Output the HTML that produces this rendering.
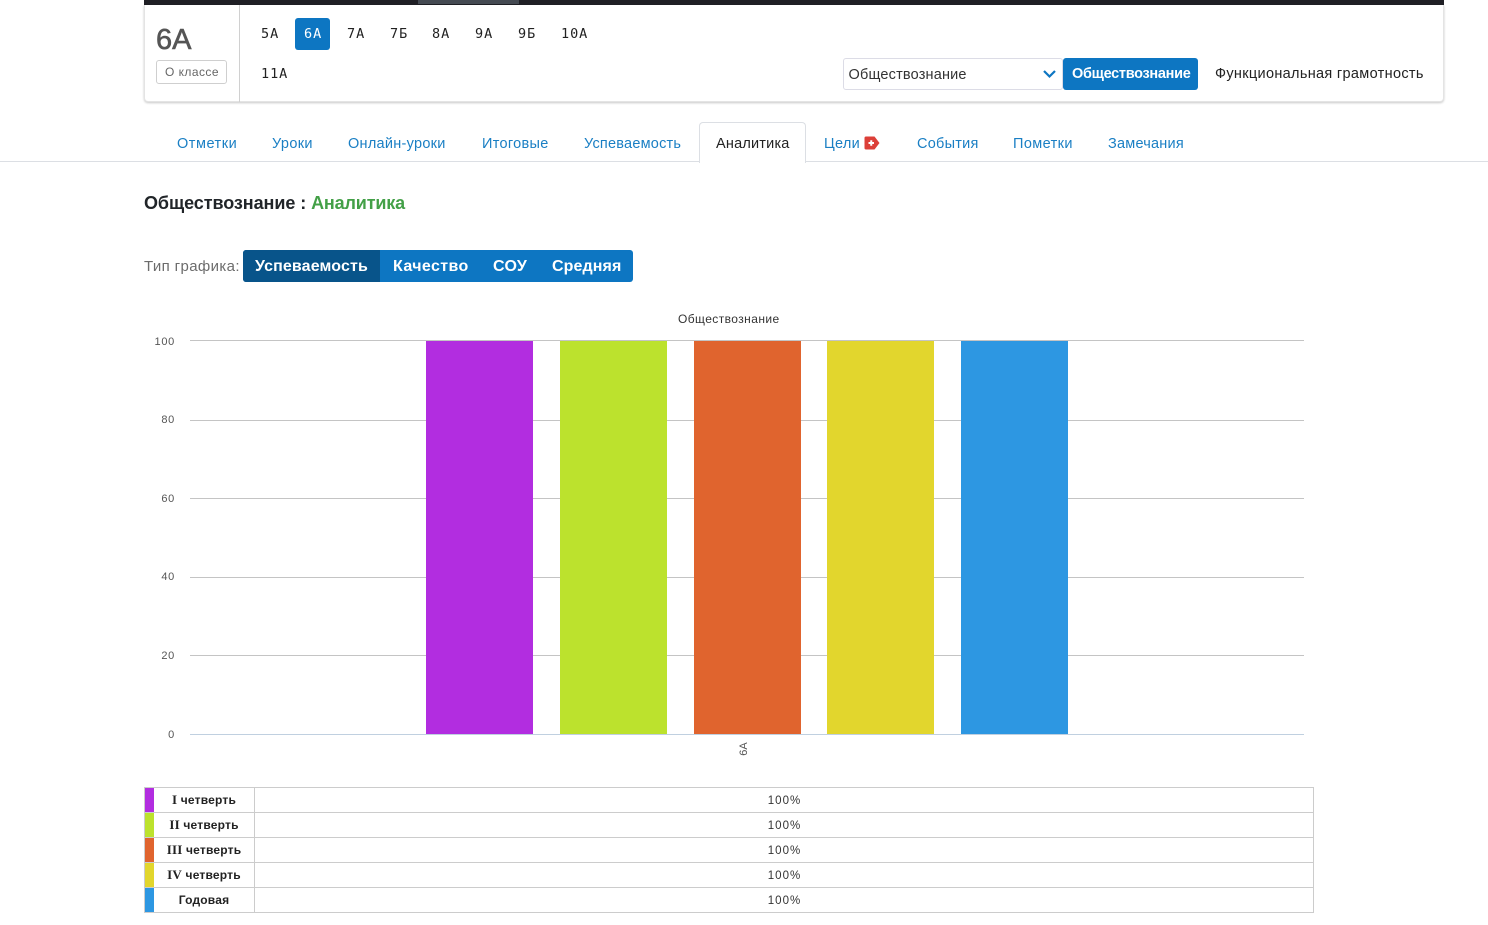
<!DOCTYPE html>
<html lang="ru"><head><meta charset="utf-8"><title>Аналитика</title>
<style>
html,body{margin:0;padding:0;background:#fff;width:1488px;height:925px;overflow:hidden}
body{position:relative;font-family:"Liberation Sans",sans-serif;color:#222}
.a,.t{position:absolute}
.t{white-space:nowrap;line-height:20px;height:20px}
.tab{font-size:14.5px;color:#1a7fc4;top:134px;letter-spacing:.27px}
.cl{font-family:"DejaVu Sans Mono","Liberation Mono",monospace;font-size:13.5px;color:#222;top:24px;letter-spacing:.95px}
.bg{font-size:16px;font-weight:700;color:#fff;top:257px}
.y{font-size:11px;color:#555;right:1313px;letter-spacing:.7px}
.g{left:190px;width:1114px;height:1px;background:#c4c4c4}
.bar{top:341px;height:393px;width:107px}
.row{left:144px;width:1168px;height:24px;border:1px solid #ccc}
.sw{left:145px;width:9px;height:24px}
.n{left:154px;width:100px;text-align:center;font-size:12px;font-weight:700;color:#222;letter-spacing:.2px}
.n b{font-family:"Liberation Serif",serif;font-size:13px}
.p{left:684px;width:200px;text-align:center;font-size:11.5px;color:#333;letter-spacing:1px}
</style></head><body>

<div class="a" style="left:144px;top:0;width:1300px;height:5px;background:#1f1f25"></div>
<div class="a" style="left:418px;top:0;width:101px;height:4px;background:#454a52"></div>

<div class="a" style="left:144px;top:5px;width:1298px;height:96px;border:1px solid #e4e4e4;border-top:0;border-radius:0 0 4px 4px;box-shadow:0 1px 2px rgba(0,0,0,.22);background:#fff"></div>
<div class="a" style="left:239px;top:5px;width:1px;height:97px;background:#d0d0d0"></div>

<div class="t" style="left:156px;top:25px;font-size:29px;line-height:30px;height:30px;color:#555;font-weight:400;-webkit-text-stroke:.6px #555">6A</div>
<div class="a" style="left:156px;top:60px;width:69px;height:22px;border:1px solid #cfcfcf;border-radius:3px"></div>
<div class="t" style="left:165px;top:62px;font-size:12px;color:#666;letter-spacing:.45px">О классе</div>

<div class="a" style="left:295px;top:18px;width:35px;height:32px;background:#0d76c2;border-radius:3px"></div>
<div class="t cl" style="left:261px">5A</div>
<div class="t cl" style="left:304px;color:#fff">6A</div>
<div class="t cl" style="left:347px">7A</div>
<div class="t cl" style="left:390px">7Б</div>
<div class="t cl" style="left:432px">8A</div>
<div class="t cl" style="left:475px">9A</div>
<div class="t cl" style="left:518px">9Б</div>
<div class="t cl" style="left:561px">10A</div>
<div class="t cl" style="left:261px;top:64px">11A</div>

<div class="a" style="left:843px;top:58px;width:218px;height:30px;border:1px solid #dcdce6;border-radius:3px;background:#fff"></div>
<div class="t" style="left:848.5px;top:65px;font-size:14.5px;color:#333;letter-spacing:.18px">Обществознание</div>
<svg class="a" style="left:1042px;top:69px" width="15" height="10" viewBox="0 0 15 10"><path d="M2 2 L7.5 7.5 L13 2" fill="none" stroke="#0d76c2" stroke-width="2.2"/></svg>
<div class="a" style="left:1063px;top:58px;width:135px;height:32px;background:#0d76c2;border-radius:3px"></div>
<div class="t" style="left:1072px;top:64px;font-size:14.5px;font-weight:700;color:#fff;letter-spacing:-.3px">Обществознание</div>
<div class="t" style="left:1215px;top:64px;font-size:14.5px;color:#222;letter-spacing:.32px">Функциональная грамотность</div>

<div class="a" style="left:0;top:161px;width:1488px;height:1px;background:#dcdfe4"></div>
<div class="a" style="left:699px;top:122px;width:105px;height:40px;border:1px solid #dcdfe4;border-bottom:0;border-radius:4px 4px 0 0;background:#fff"></div>

<div class="t tab" style="left:177px;letter-spacing:.52px">Отметки</div>
<div class="t tab" style="left:272px;letter-spacing:.35px">Уроки</div>
<div class="t tab" style="left:348px">Онлайн-уроки</div>
<div class="t tab" style="left:482px;letter-spacing:.3px">Итоговые</div>
<div class="t tab" style="left:584px;letter-spacing:.22px">Успеваемость</div>
<div class="t tab" style="left:716px;color:#222;letter-spacing:.2px">Аналитика</div>
<div class="t tab" style="left:824px;letter-spacing:.3px">Цели</div>
<svg class="a" style="left:864px;top:136px" width="16" height="14" viewBox="0 0 16 14"><path d="M2 0.5H10.5L15.5 7L10.5 13.5H2Q0.5 13.5 0.5 12V2Q0.5 0.5 2 0.5Z" fill="#dc3f38"/><path d="M4.5 7H10M7.25 4.3V9.7" stroke="#fff" stroke-width="2"/></svg>
<div class="t tab" style="left:917px;letter-spacing:.25px">События</div>
<div class="t tab" style="left:1013px;letter-spacing:.4px">Пометки</div>
<div class="t tab" style="left:1108px;letter-spacing:.22px">Замечания</div>

<div class="t" style="left:144px;top:193px;font-size:18px;font-weight:700;color:#212529;letter-spacing:-.07px">Обществознание : <span style="color:#43a047;letter-spacing:-.15px">Аналитика</span></div>

<div class="t" style="left:144px;top:257px;font-size:15px;color:#6c6c6c;letter-spacing:.37px">Тип графика:</div>
<div class="a" style="left:243px;top:250px;width:390px;height:32px;background:#0d76c2;border-radius:3px"></div>
<div class="a" style="left:243px;top:250px;width:137px;height:32px;background:#08548a;border-radius:3px 0 0 3px"></div>
<div class="t bg" style="left:255px;letter-spacing:.13px">Успеваемость</div>
<div class="t bg" style="left:393px;letter-spacing:.38px">Качество</div>
<div class="t bg" style="left:493px;letter-spacing:.33px">СОУ</div>
<div class="t bg" style="left:552px;letter-spacing:.1px">Средняя</div>

<div class="t" style="left:678px;top:309px;font-size:12px;color:#333;letter-spacing:.42px">Обществознание</div>

<div class="a g" style="top:340px"></div>
<div class="a g" style="top:420px"></div>
<div class="a g" style="top:498px"></div>
<div class="a g" style="top:577px"></div>
<div class="a g" style="top:655px"></div>
<div class="a g" style="top:734px;background:#c0d0e0"></div>

<div class="t y" style="top:332px">100</div>
<div class="t y" style="top:410px">80</div>
<div class="t y" style="top:489px">60</div>
<div class="t y" style="top:567px">40</div>
<div class="t y" style="top:646px">20</div>
<div class="t y" style="top:725px">0</div>

<div class="a bar" style="left:426px;background:#b22de0"></div>
<div class="a bar" style="left:560px;background:#bce22d"></div>
<div class="a bar" style="left:694px;background:#e0642e"></div>
<div class="a bar" style="left:827px;background:#e2d62d"></div>
<div class="a bar" style="left:961px;background:#2d97e2"></div>

<div class="t" style="left:734px;top:739px;width:20px;text-align:center;font-size:11px;color:#555;transform:rotate(-90deg)">6A</div>

<div class="a row" style="top:787px"></div>
<div class="a row" style="top:812px"></div>
<div class="a row" style="top:837px"></div>
<div class="a row" style="top:862px"></div>
<div class="a row" style="top:887px"></div>
<div class="a" style="left:254px;top:787px;width:1px;height:125px;background:#ccc"></div>
<div class="a sw" style="top:788px;background:#b22de0"></div>
<div class="a sw" style="top:813px;background:#bce22d"></div>
<div class="a sw" style="top:838px;background:#e0642e"></div>
<div class="a sw" style="top:863px;background:#e2d62d"></div>
<div class="a sw" style="top:888px;background:#2d97e2"></div>

<div class="t n" style="top:790px"><b>I</b> четверть</div>
<div class="t n" style="top:815px"><b>II</b> четверть</div>
<div class="t n" style="top:840px"><b>III</b> четверть</div>
<div class="t n" style="top:865px"><b>IV</b> четверть</div>
<div class="t n" style="top:890px">Годовая</div>

<div class="t p" style="top:791px;left:684.5px">100%</div>
<div class="t p" style="top:816px;left:684.5px">100%</div>
<div class="t p" style="top:841px;left:684.5px">100%</div>
<div class="t p" style="top:866px;left:684.5px">100%</div>
<div class="t p" style="top:891px;left:684.5px">100%</div>

</body></html>
